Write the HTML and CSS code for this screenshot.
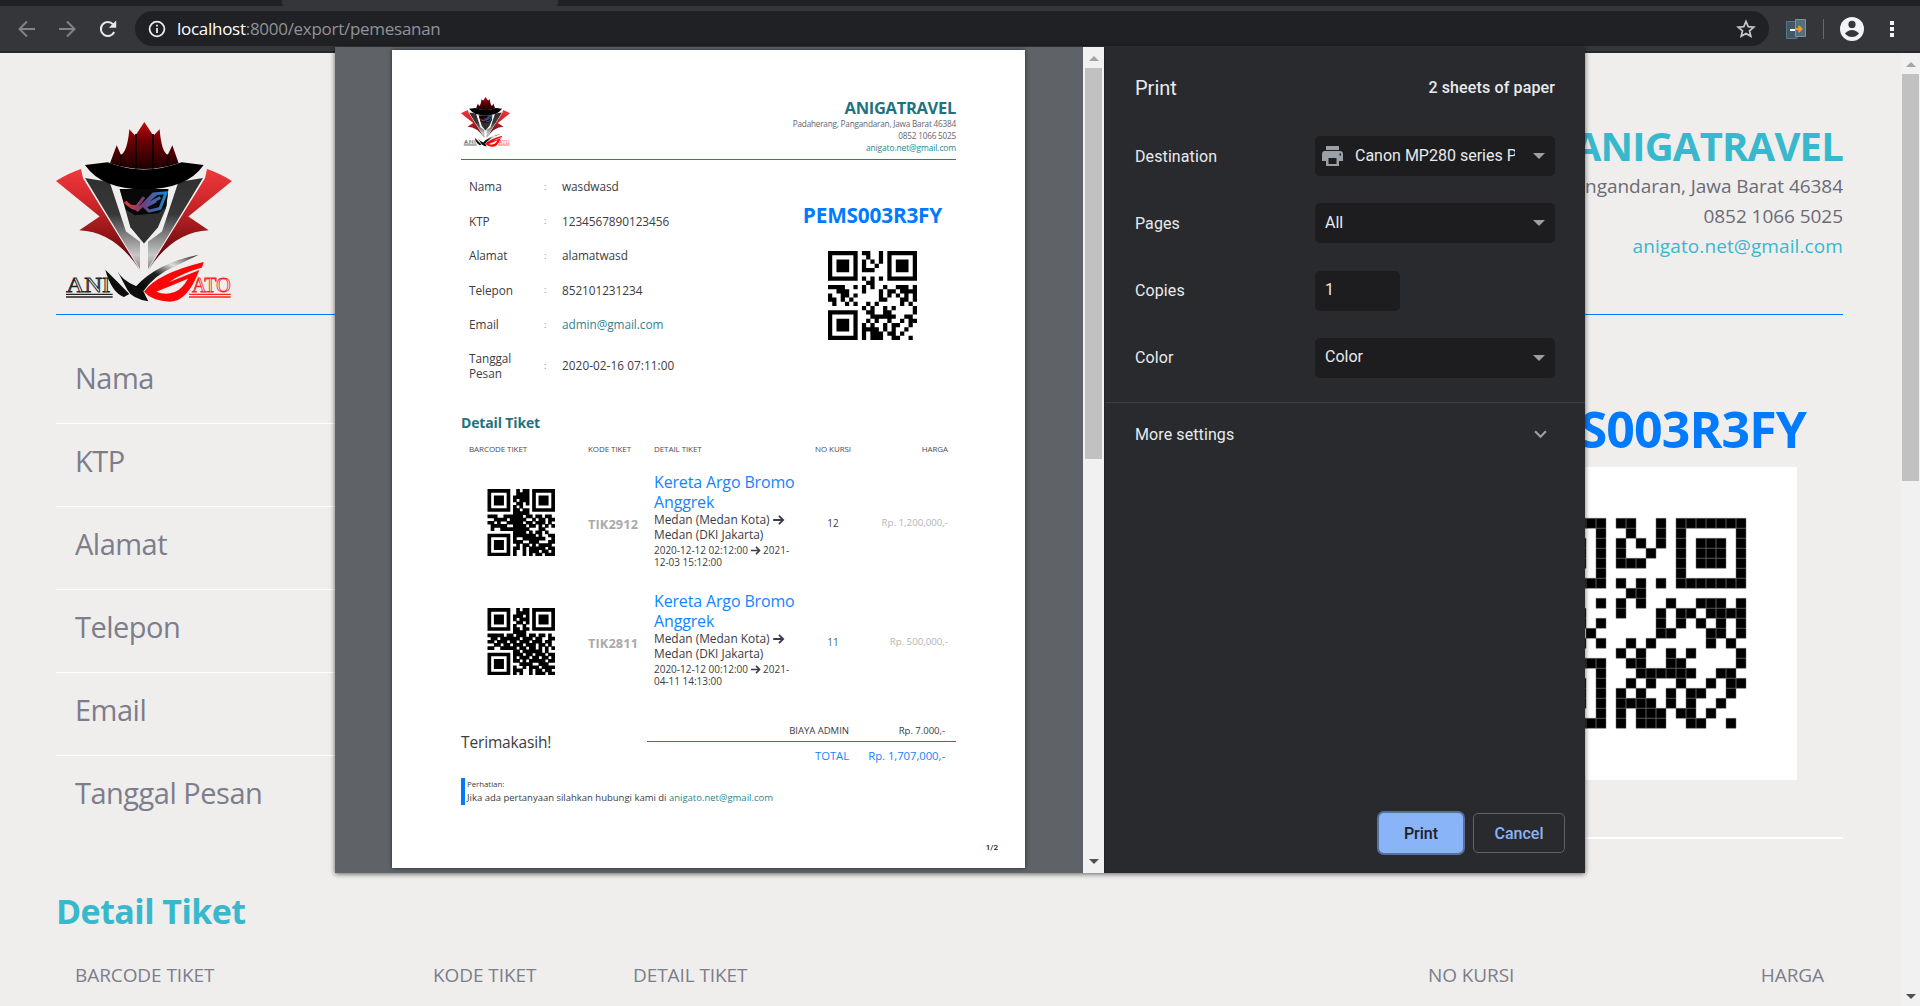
FILE: index.html
```html
<!DOCTYPE html>
<html lang="id">
<head>
<meta charset="utf-8">
<title>Pemesanan</title>
<link rel="stylesheet" href="styles.css">
</head>
<body>
<svg class="defs" width="0" height="0">
  <defs>
    <linearGradient id="wing" x1="0" y1="0" x2="0" y2="1"><stop offset="0" stop-color="#f0383d"/><stop offset=".35" stop-color="#cc2529"/><stop offset="1" stop-color="#4a0205"/></linearGradient>
    <linearGradient id="lapel" x1="0" y1="0" x2="0" y2="1"><stop offset="0" stop-color="#303030"/><stop offset=".4" stop-color="#383838"/><stop offset=".85" stop-color="#c8c8c8"/><stop offset="1" stop-color="#888"/></linearGradient>
    <linearGradient id="crown" x1="0" y1="0" x2="0" y2="1"><stop offset="0" stop-color="#c00a10"/><stop offset=".4" stop-color="#6c0004"/><stop offset="1" stop-color="#1c0000"/></linearGradient>
    <linearGradient id="eye" x1="0" y1="0" x2="1" y2="0"><stop offset="0" stop-color="#e23a30"/><stop offset=".45" stop-color="#6b3f80"/><stop offset="1" stop-color="#1987d0"/></linearGradient>
    <linearGradient id="steel" x1="0" y1="1" x2="1" y2="0"><stop offset="0" stop-color="#000"/><stop offset=".4" stop-color="#222"/><stop offset=".65" stop-color="#ddd"/><stop offset="1" stop-color="#222"/></linearGradient>
    <symbol id="logo" viewBox="48 36 528 544" preserveAspectRatio="none">
      <path fill="url(#wing)" d="M48 213Q84 190 123 177L129 205 300 482Q225 365 118 361L179 320Z"/>
      <path fill="url(#wing)" d="M576 213Q540 190 501 177L495 205 324 482Q399 365 506 361L445 320Z"/>
      <path fill="url(#lapel)" d="M135 204L209 216 258 365 300 396V478Z"/>
      <path fill="url(#lapel)" d="M489 204L415 216 366 365 324 396V478Z"/>
      <path fill="#303030" d="M239 237H385L378 295 354 352 312 401 271 352Z"/>
      <path fill="#080808" d="M239 237H385L379 290 355 310 285 316 258 300Z"/>
      <path fill="none" stroke="url(#eye)" stroke-width="9" d="M256 275Q268 295 292 288L312 262M264 282Q280 302 300 294L340 252 378 249 360 296 327 304 314 291 348 273M290 304Q305 284 325 282L361 263M318 278L352 250"/>
      <path fill="#000" d="M135 165L203 157Q310 200 425 157L491 165Q440 238 312 238 185 238 135 165Z"/>
      <path fill="url(#crown)" d="M210 160L230 106 243 135Q262 125 268 58L286 77 313 36 340 77 359 58Q364 125 383 135L397 106 416 160Q312 195 210 160Z"/>
      <path stroke="#080000" stroke-width="5" d="M288 72V176M339 72V176M243 134V166M383 134V166"/>
      <path fill="#0c0c0c" d="M196 480L232 516 268 553 252 562Q214 548 196 480Z"/>
      <path fill="#0c0c0c" d="M232 484Q246 512 286 528L310 545 325 575Q275 566 262 540Z"/>
      <path fill="url(#steel)" d="M286 532Q350 460 476 435L404 470Q342 496 310 545Z"/>
      <path fill="#fb0508" fill-rule="evenodd" d="M312 546Q350 492 491 457L486 473Q420 492 388 517L478 481Q443 576 390 576 335 573 312 546ZM349 546Q376 558 404 547 426 539 444 507Z"/>
      <g font-family="Liberation Serif" font-size="60" fill="none" stroke-width="2.4">
        <text x="79" y="546" stroke="#222" textLength="132" lengthAdjust="spacingAndGlyphs">ANI</text>
        <text x="456" y="546" stroke="#f22" textLength="116" lengthAdjust="spacingAndGlyphs">ATO</text>
      </g>
      <path stroke="#222" stroke-width="4" d="M78 554H218M78 562H218"/>
      <path stroke="#f22" stroke-width="4" d="M447 554H572M447 562H572"/>
    </symbol>
    <symbol id="arrow" viewBox="0 0 14 12"><path d="M0 6H12M7 1L12 6 7 11" fill="none" stroke="currentColor" stroke-width="2.2"/></symbol>
  </defs>
</svg>

<header class="browser">
  <div class="tabs"><span class="tab"></span></div>
  <div class="toolbar">
    <svg class="nav dim" viewBox="0 0 18 18"><path d="M17 9H2M9 1.5L1.5 9 9 16.500"/></svg>
    <svg class="nav dim" viewBox="0 0 18 18"><path d="M1 9H16M9 1.500L16.500 9 9 16.500"/></svg>
    <svg class="nav" viewBox="0 0 18 18"><path d="M15.200 12A7 7 0 1 1 14 4.200"/><path d="M17.200 .5V7.800H9.900Z" class="solid"/></svg>
    <div class="omnibox">
      <svg class="info" viewBox="0 0 18 18"><circle cx="9" cy="9" r="7.400"/><path d="M9 8V13M9 4.800V6.600"/></svg>
      <span class="url"><b>localhost</b>:8000/export/pemesanan</span>
      <svg class="star" viewBox="0 0 20 20"><path d="M10 2.400L12.200 7.600 17.800 8.100 13.500 11.800 14.800 17.300 10 14.400 5.200 17.300 6.500 11.800 2.200 8.100 7.800 7.600Z"/></svg>
    </div>
    <svg class="ext" viewBox="0 0 20 20"><path fill="#3f5a66" stroke="#587684" d="M.5 2.500H11V19.500H.5Z"/><path fill="#55707d" stroke="#7595a3" d="M9.500 .5H19.500V17.500H9.500Z"/><path stroke="#fff" stroke-width="2" d="M4 11H9"/><path stroke="#f59a14" stroke-width="2" fill="none" d="M9 10H15M12.500 7L15.500 10 12.500 13"/></svg>
    <span class="sep"></span>
    <svg class="avatar" viewBox="0 0 24 24"><circle cx="12" cy="12" r="12" fill="#f1f3f4"/><circle cx="12" cy="7.400" r="3.600" fill="#35363a"/><path d="M5 16.500Q8 13 12 13T19 16.500Q16 20 12 20T5 16.500Z" fill="#35363a"/></svg>
    <svg class="dots" viewBox="0 0 4 18"><path d="M0 1h4v4H0zM0 7h4v4H0zM0 13h4v4H0z" fill="#f1f3f4"/></svg>
  </div>
</header>

<div class="viewport">
  <main class="site">
    <section class="site-head">
      <svg class="site-logo"><use href="#logo"/></svg>
      <div class="company">
        <h2>ANIGATRAVEL</h2>
        <p>Padaherang, Pangandaran, Jawa Barat 46384</p>
        <p>0852 1066 5025</p>
        <p class="mail">anigato.net@gmail.com</p>
      </div>
    </section>
    <section class="site-order">
      <ul class="fields">
        <li>Nama</li><li>KTP</li><li>Alamat</li><li>Telepon</li><li>Email</li><li>Tanggal Pesan</li>
      </ul>
      <div class="order-code">
        <h1>PEMS003R3FY</h1>
        <svg class="qr big" data-code="order" viewBox="-5.100 -5.130 31.200 31.300"></svg>
      </div>
    </section>
    <h3 class="site-title">Detail Tiket</h3>
    <div class="site-cols"><span>BARCODE TIKET</span><span>KODE TIKET</span><span>DETAIL TIKET</span><span>NO KURSI</span><span>HARGA</span></div>
  </main>
  <div class="scroll page-scroll"><i class="up"></i><i class="thumb"></i><i class="down"></i></div>
</div>

<div class="dialog">
  <div class="preview">
    <article class="paper">
      <section class="p-head">
        <svg class="p-logo"><use href="#logo"/></svg>
        <div class="p-company">
          <h2>ANIGATRAVEL</h2>
          <p>Padaherang, Pangandaran, Jawa Barat 46384</p>
          <p>0852 1066 5025</p>
          <p class="teal">anigato.net@gmail.com</p>
        </div>
      </section>
      <section class="p-order">
        <dl>
          <div><dt>Nama</dt><i>:</i><dd>wasdwasd</dd></div>
          <div><dt>KTP</dt><i>:</i><dd class="num">1234567890123456</dd></div>
          <div><dt>Alamat</dt><i>:</i><dd>alamatwasd</dd></div>
          <div><dt>Telepon</dt><i>:</i><dd class="num">852101231234</dd></div>
          <div><dt>Email</dt><i>:</i><dd class="teal">admin@gmail.com</dd></div>
          <div class="tall"><dt>Tanggal Pesan</dt><i>:</i><dd class="date">2020-02-16 07:11:00</dd></div>
        </dl>
        <div class="p-code">
          <h1>PEMS003R3FY</h1>
          <svg class="qr mid" data-code="order" viewBox="0 0 21 21"></svg>
        </div>
      </section>
      <h3 class="p-title">Detail Tiket</h3>
      <div class="p-row p-cols"><span>BARCODE TIKET</span><span>KODE TIKET</span><span>DETAIL TIKET</span><span class="c">NO KURSI</span><span class="r">HARGA</span></div>
      <div class="p-row ticket">
        <svg class="qr small" data-code="t1" viewBox="0 0 21 21"></svg>
        <b>TIK2912</b>
        <div class="trip"><h4>Kereta Argo Bromo<br>Anggrek</h4><p>Medan (Medan Kota) <svg><use href="#arrow"/></svg><br>Medan (DKI Jakarta)</p><small>2020-12-12 02:12:00 <svg><use href="#arrow"/></svg> 2021-<br>12-03 15:12:00</small></div>
        <span class="c">12</span><span class="r price">Rp. 1,200,000,-</span>
      </div>
      <div class="p-row ticket">
        <svg class="qr small" data-code="t2" viewBox="0 0 21 21"></svg>
        <b>TIK2811</b>
        <div class="trip"><h4>Kereta Argo Bromo<br>Anggrek</h4><p>Medan (Medan Kota) <svg><use href="#arrow"/></svg><br>Medan (DKI Jakarta)</p><small>2020-12-12 00:12:00 <svg><use href="#arrow"/></svg> 2021-<br>04-11 14:13:00</small></div>
        <span class="c teen">11</span><span class="r price">Rp. 500,000,-</span>
      </div>
      <section class="p-foot">
        <span class="thanks">Terimakasih!</span>
        <div class="sums">
          <div class="admin"><span>BIAYA ADMIN</span><span>Rp. 7.000,-</span></div>
          <div class="total"><span>TOTAL</span><span>Rp. 1,707,000,-</span></div>
        </div>
      </section>
      <div class="notice"><small>Perhatian:</small><p>Jika ada pertanyaan silahkan hubungi kami di <span class="teal">anigato.net@gmail.com</span></p></div>
      <span class="pageno">1/2</span>
    </article>
  </div>
  <div class="scroll dlg-scroll"><i class="up"></i><i class="thumb"></i><i class="down"></i></div>
  <aside class="panel">
    <div class="p-top"><span>Print</span><b>2 sheets of paper</b></div>
    <div class="opt"><label>Destination</label><div class="box dest"><svg viewBox="0 0 22 20"><path d="M4 0H17V4H4ZM3 5H18Q21 5 21 8V15H17V20H4V15H0V8Q0 5 3 5ZM6.500 12V18H14.500V12ZM17.500 7.500V9.500H19V7.500Z" fill="#9aa0a6" fill-rule="evenodd"/></svg><span>Canon MP280 series Printer</span><i></i></div></div>
    <div class="opt"><label>Pages</label><div class="box"><span>All</span><i></i></div></div>
    <div class="opt"><label>Copies</label><div class="box copies"><span>1</span></div></div>
    <div class="opt"><label>Color</label><div class="box"><span>Color</span><i></i></div></div>
    <div class="more"><span>More settings</span><svg viewBox="0 0 12 8"><path d="M1 1L6 6 11 1" fill="none" stroke="#9aa0a6" stroke-width="2"/></svg></div>
    <div class="actions"><button class="go">Print</button><button>Cancel</button></div>
  </aside>
</div>
<script src="qr.js"></script>
</body>
</html>
```
FILE: styles.css
```css
* { box-sizing: border-box; margin: 0; padding: 0; }
body { width: 1920px; height: 1006px; overflow: hidden; background: #efeeed; font-family: "Open Sans", "Noto Sans", sans-serif; }
ul { list-style: none; }
i { font-style: normal; }
.defs { position: absolute; }

/* browser chrome */
.browser { height: 53px; background: #35363a; border-bottom: 2px solid #28282a; }
.tabs { height: 6px; background: #202124; padding-left: 282px; }
.tab { display: block; width: 276px; height: 6px; background: #35363a; border-radius: 0 0 3px 3px; }
.toolbar { height: 45px; display: flex; align-items: center; padding: 0 26px 0 18px; }
.nav { width: 18px; height: 18px; margin-right: 22px; fill: none; stroke: #e8eaed; stroke-width: 2; }
.nav:nth-child(3) { margin: 0 18px 0 1px; }
.nav.dim { stroke: #808387; }
.nav .solid { fill: #e8eaed; stroke: none; }
.omnibox { width: 1634px; height: 35px; border-radius: 18px; background: #202124; display: flex; align-items: center; padding: 0 13px; }
.info { width: 18px; height: 18px; fill: none; stroke: #e8eaed; stroke-width: 1.800; }
.url { flex: 1; margin-left: 11px; font-size: 17px; letter-spacing: -.28px; color: #8f9399; }
.url b { font-weight: 400; color: #fff; }
.star { width: 20px; height: 20px; fill: none; stroke: #c4c7cc; stroke-width: 1.700; }
.ext { width: 20px; height: 20px; margin-left: 17px; }
.sep { width: 1px; height: 20px; background: #66696d; margin-left: 17px; }
.avatar { width: 24px; height: 24px; margin-left: 16px; }
.dots { width: 4px; height: 18px; margin-left: 26px; }

/* page */
.viewport { height: 953px; display: flex; }
.site { width: 1901px; padding: 0 58px 0 56px; }
.site-head { height: 262px; border-bottom: 1px solid #007bff; display: flex; justify-content: space-between; padding-top: 69px; }
.site-logo { width: 176px; height: 181px; }
.company { text-align: right; color: #6b6b75; font-size: 19px; letter-spacing: -.05px; margin-top: -2px; }
.company h2 { font-size: 40px; line-height: 52px; height: 51px; color: #38b8cc; letter-spacing: -.8px; }
.company p { line-height: 30px; }
.company .mail { color: #38b8cc; letter-spacing: .1px; }
.site-order { height: 524px; display: flex; justify-content: space-between; }
.fields { width: 1150px; padding-top: 26px; }
.fields li { height: 83px; line-height: 74px; border-bottom: 1px solid #fff; padding-left: 19px; font-size: 29px; letter-spacing: -.5px; color: #7d7d8b; }
.fields li:last-child { border: 0; }
.order-code { width: 404px; padding-top: 79px; display: flex; flex-direction: column; align-items: center; border-bottom: 2px solid #fff; }
.order-code h1 { font-size: 50px; line-height: 70px; color: #007bff; letter-spacing: -.9px; margin-bottom: 3px; }
.big { width: 312px; height: 313px; flex: none; background: #fff; }
.big path { stroke: #6a6a6a; stroke-width: .05; }
.site-title { font-size: 34px; line-height: 50px; margin-top: 47px; color: #38b8cc; letter-spacing: -.55px; }
.site-cols { display: grid; grid-template-columns: 358px 200px 795px 1fr 100px; padding: 0 19px; margin-top: 24px; font-size: 19px; line-height: 30px; letter-spacing: -.08px; color: #7d7d8b; }
.site-cols :last-child { text-align: right; }

/* scrollbars */
.scroll { background: #f1f1f1; display: flex; flex-direction: column; align-items: center; }
.scroll .up, .scroll .down { width: 0; border: 5px solid transparent; }
.scroll .up { border-top: 0; border-bottom-color: #a3a3a3; }
.scroll .down { border-bottom: 0; border-top-color: #505050; margin-top: auto; }
.thumb { background: #c1c1c1; }
.page-scroll { width: 19px; padding: 9px 0 7px; }
.page-scroll .thumb { width: 17px; height: 407px; margin-top: 7px; }
.dlg-scroll { width: 21px; padding: 9px 0 9px; }
.dlg-scroll .thumb { width: 17px; height: 391px; margin-top: 7px; }

/* print dialog */
.dialog { position: absolute; left: 335px; top: 47px; width: 1250px; height: 826px; display: flex; background: #292a2d; box-shadow: 0 1px 5px rgba(0,0,0,.6); }
.preview { width: 748px; background: #5f6368; padding: 3px 0 0 57px; }
.paper { width: 633px; height: 818px; background: #fff; padding: 0 69px 0 69px; color: #3c3c44; box-shadow: 0 0 4px rgba(0,0,0,.6); display: flex; flex-direction: column; }
.teal { color: #2f8490; }
.p-head { height: 110px; border-bottom: 1px solid #007bff; display: flex; justify-content: space-between; padding-top: 47px; }
.p-logo { width: 49px; height: 50px; }
.p-company { text-align: right; font-size: 8.200px; letter-spacing: -.2px; color: #65656d; }
.p-company h2 { font-size: 16.500px; line-height: 22px; height: 21px; color: #1f7380; letter-spacing: -.3px; }
.p-company p { line-height: 12px; }
.p-company .teal { color: #2f8490; font-size: 8.500px; letter-spacing: -.15px; }
.p-order { height: 240px; display: flex; }
.p-order dl { width: 328px; padding: 9px 0 0 8px; font-size: 11.800px; }
.p-order dl div { height: 34.500px; display: flex; align-items: center; }
.p-order dl .tall { height: 48px; line-height: 15px; }
.p-order dt { width: 75px; padding-right: 20px; letter-spacing: -.05px; }
.p-order dl i { width: 18px; font-size: 9px; color: #888; }
.p-order dd { letter-spacing: -.05px; }
.p-order .date { letter-spacing: .05px; }
.p-code { width: 167px; padding-top: 40px; display: flex; flex-direction: column; align-items: center; }
.p-code h1 { font-size: 20.800px; line-height: 30px; color: #007bff; letter-spacing: -.2px; }
.mid { width: 89px; height: 89px; margin-top: 21px; }
.p-title { font-size: 14px; line-height: 20px; margin-top: 13px; color: #1f7380; letter-spacing: -.15px; }
.p-row { display: grid; grid-template-columns: 119px 66px 145px 68px 81px; padding-left: 8px; align-items: center; }
.c { text-align: center; }
.r { text-align: right; }
.p-cols { height: 31px; font-size: 8px; letter-spacing: -.08px; color: #4c4c54; }
.ticket { height: 119px; }
.small { width: 68px; height: 67px; margin-left: 18px; margin-top: -2px; }
.ticket b { font-size: 12.800px; letter-spacing: .1px; color: #aaa; }
.trip { margin-top: -7px; }
.trip h4 { font-weight: 400; font-size: 16px; line-height: 20px; color: #1484ff; letter-spacing: -.15px; white-space: nowrap; }
.trip p { font-size: 11.900px; line-height: 14.500px; letter-spacing: 0; white-space: nowrap; }
.trip small { display: block; font-size: 10px; line-height: 12px; margin-top: 3px; letter-spacing: -.02px; }
.trip svg { width: 12px; height: 10px; vertical-align: -1px; }
.trip small svg { width: 10px; height: 9px; }
.ticket .c { font-size: 10px; margin-top: -2px; }
.ticket .teen { color: #3b6a86; }
.ticket .price { font-size: 9.700px; letter-spacing: 0; color: #b4b4b4; margin-top: -2px; }
.p-foot { height: 49px; margin-top: 18px; display: flex; justify-content: space-between; }
.thanks { font-size: 15.500px; line-height: 44px; letter-spacing: -.15px; }
.sums { width: 309px; font-size: 9.600px; letter-spacing: -.05px; }
.sums div { display: grid; grid-template-columns: 202px 96px; text-align: right; }
.admin { height: 22px; line-height: 21px; border-bottom: 1px solid #007bff; }
.total { line-height: 28px; color: #1484ff; font-size: 11.300px; }
.notice { margin-top: 9px; height: 27px; border-left: 4px solid #007bff; padding-left: 2px; font-size: 9.500px; line-height: 14px; }
.notice small { display: block; font-size: 7.800px; line-height: 12px; }
.notice p { white-space: nowrap; letter-spacing: -.01px; padding-top: 1px; }
.pageno { font: 500 8px/12px Roboto, sans-serif; color: #111; align-self: flex-end; margin: 37px -42px 0 0; }

.panel { width: 481px; border-left: 1px solid #222326; color: #e8eaed; font: 400 16px Roboto, sans-serif; display: flex; flex-direction: column; }
.p-top { display: flex; justify-content: space-between; align-items: center; padding: 0 30px; height: 81px; font-size: 20px; margin-bottom: 8px; }
.p-top b { font-size: 16px; font-weight: 500; letter-spacing: .13px; }
.opt { height: 40px; margin-bottom: 27.300px; display: flex; align-items: center; padding: 0 30px; }
.opt label { width: 180px; letter-spacing: .1px; }
.box { width: 240px; height: 40px; border-radius: 5px; background: #1d1d1f; display: flex; align-items: center; padding: 0 10px; }
.box span { flex: 1; overflow: hidden; white-space: nowrap; line-height: 20px; margin-top: -1px; }
.box i { border: 6px solid transparent; border-top-color: #9aa0a6; border-bottom: 0; }
.dest { padding-left: 7px; }
.dest svg { width: 22px; height: 20px; margin-right: 11px; }
.dest span { flex: 0 0 160px; }
.dest i { margin-left: auto; }
.copies { width: 85px; }
.more { border-top: 1px solid #3c4043; margin-top: -3px; height: 64px; display: flex; align-items: center; justify-content: space-between; padding: 0 38px 0 30px; letter-spacing: .1px; }
.more svg { width: 13px; height: 9px; }
.actions { margin-top: auto; padding: 0 20px 20px; display: flex; justify-content: flex-end; gap: 10px; }
button { width: 92px; height: 40px; border: 1px solid #5f6368; border-radius: 5px; background: none; color: #8ab4f8; font: 500 16px Roboto, sans-serif; }
.go { width: 84px; background: #8ab4f8; color: #202124; border: 0; box-shadow: 0 0 0 2px #56719c; }
```
FILE: qr.js
```javascript
const codes = {
  order: [
    "111111101100101111111", "100000100100101000001", "101110101010101011101",
    "101110101001001011101", "101110101110001011101", "100000100000001000001",
    "111111101010101111111", "000000000110000000000", "111100101010010011101",
    "001110001000101101111", "100110100000101010101", "110101000000110001101",
    "010010100101000001010", "000000001010010100001", "111111100110011000001",
    "100000100011111100110", "101110100101001001011", "101110101010010110010",
    "101110101111010100100", "100000101011101101000", "111111101011100110010"
  ],
  t1: [
    "111111100101101111111", "100000100111101000001", "101110101111101011101",
    "101110101011101011101", "101110100110101011101", "100000101010001000001",
    "111111101101101111111", "000000001111100000000", "111001111110110110110",
    "001111011111001011011", "110100111110110111010", "011111001111011010101",
    "010011111111100011000", "000000001111010110100", "111111101111111010011",
    "100000101001111111001", "101110101110011100011", "101110100101101011110",
    "101110101101011111011", "100000101001011101101", "111111101001010110111"
  ],
  t2: [
    "111111100101101111111", "100000100111101000001", "101110101110101011101",
    "101110101011101011101", "101110100110101011101", "100000101001001000001",
    "111111101101101111111", "000000001111000000000", "111110110111011011010",
    "011011111101110110011", "110111011011101110110", "001101101110111011010",
    "110011111011011010101", "000000001101111110100", "111111101110110111011",
    "100000101011101101101", "101110101101011111011", "101110100011110011100",
    "101110101001011101111", "100000101110010110110", "111111101010010111011"
  ]
};
document.querySelectorAll("svg.qr").forEach(svg => {
  const name = svg.dataset.code;
  const s = name === "order" ? 1 : 1.15;
  let d = "";
  codes[name].forEach((row, y) => [...row].forEach((bit, x) => {
    if (bit === "1") d += `M${x} ${y}h${s}v${s}h${-s}z`;
  }));
  const path = document.createElementNS("http://www.w3.org/2000/svg", "path");
  path.setAttribute("d", d);
  svg.appendChild(path);
});
```
